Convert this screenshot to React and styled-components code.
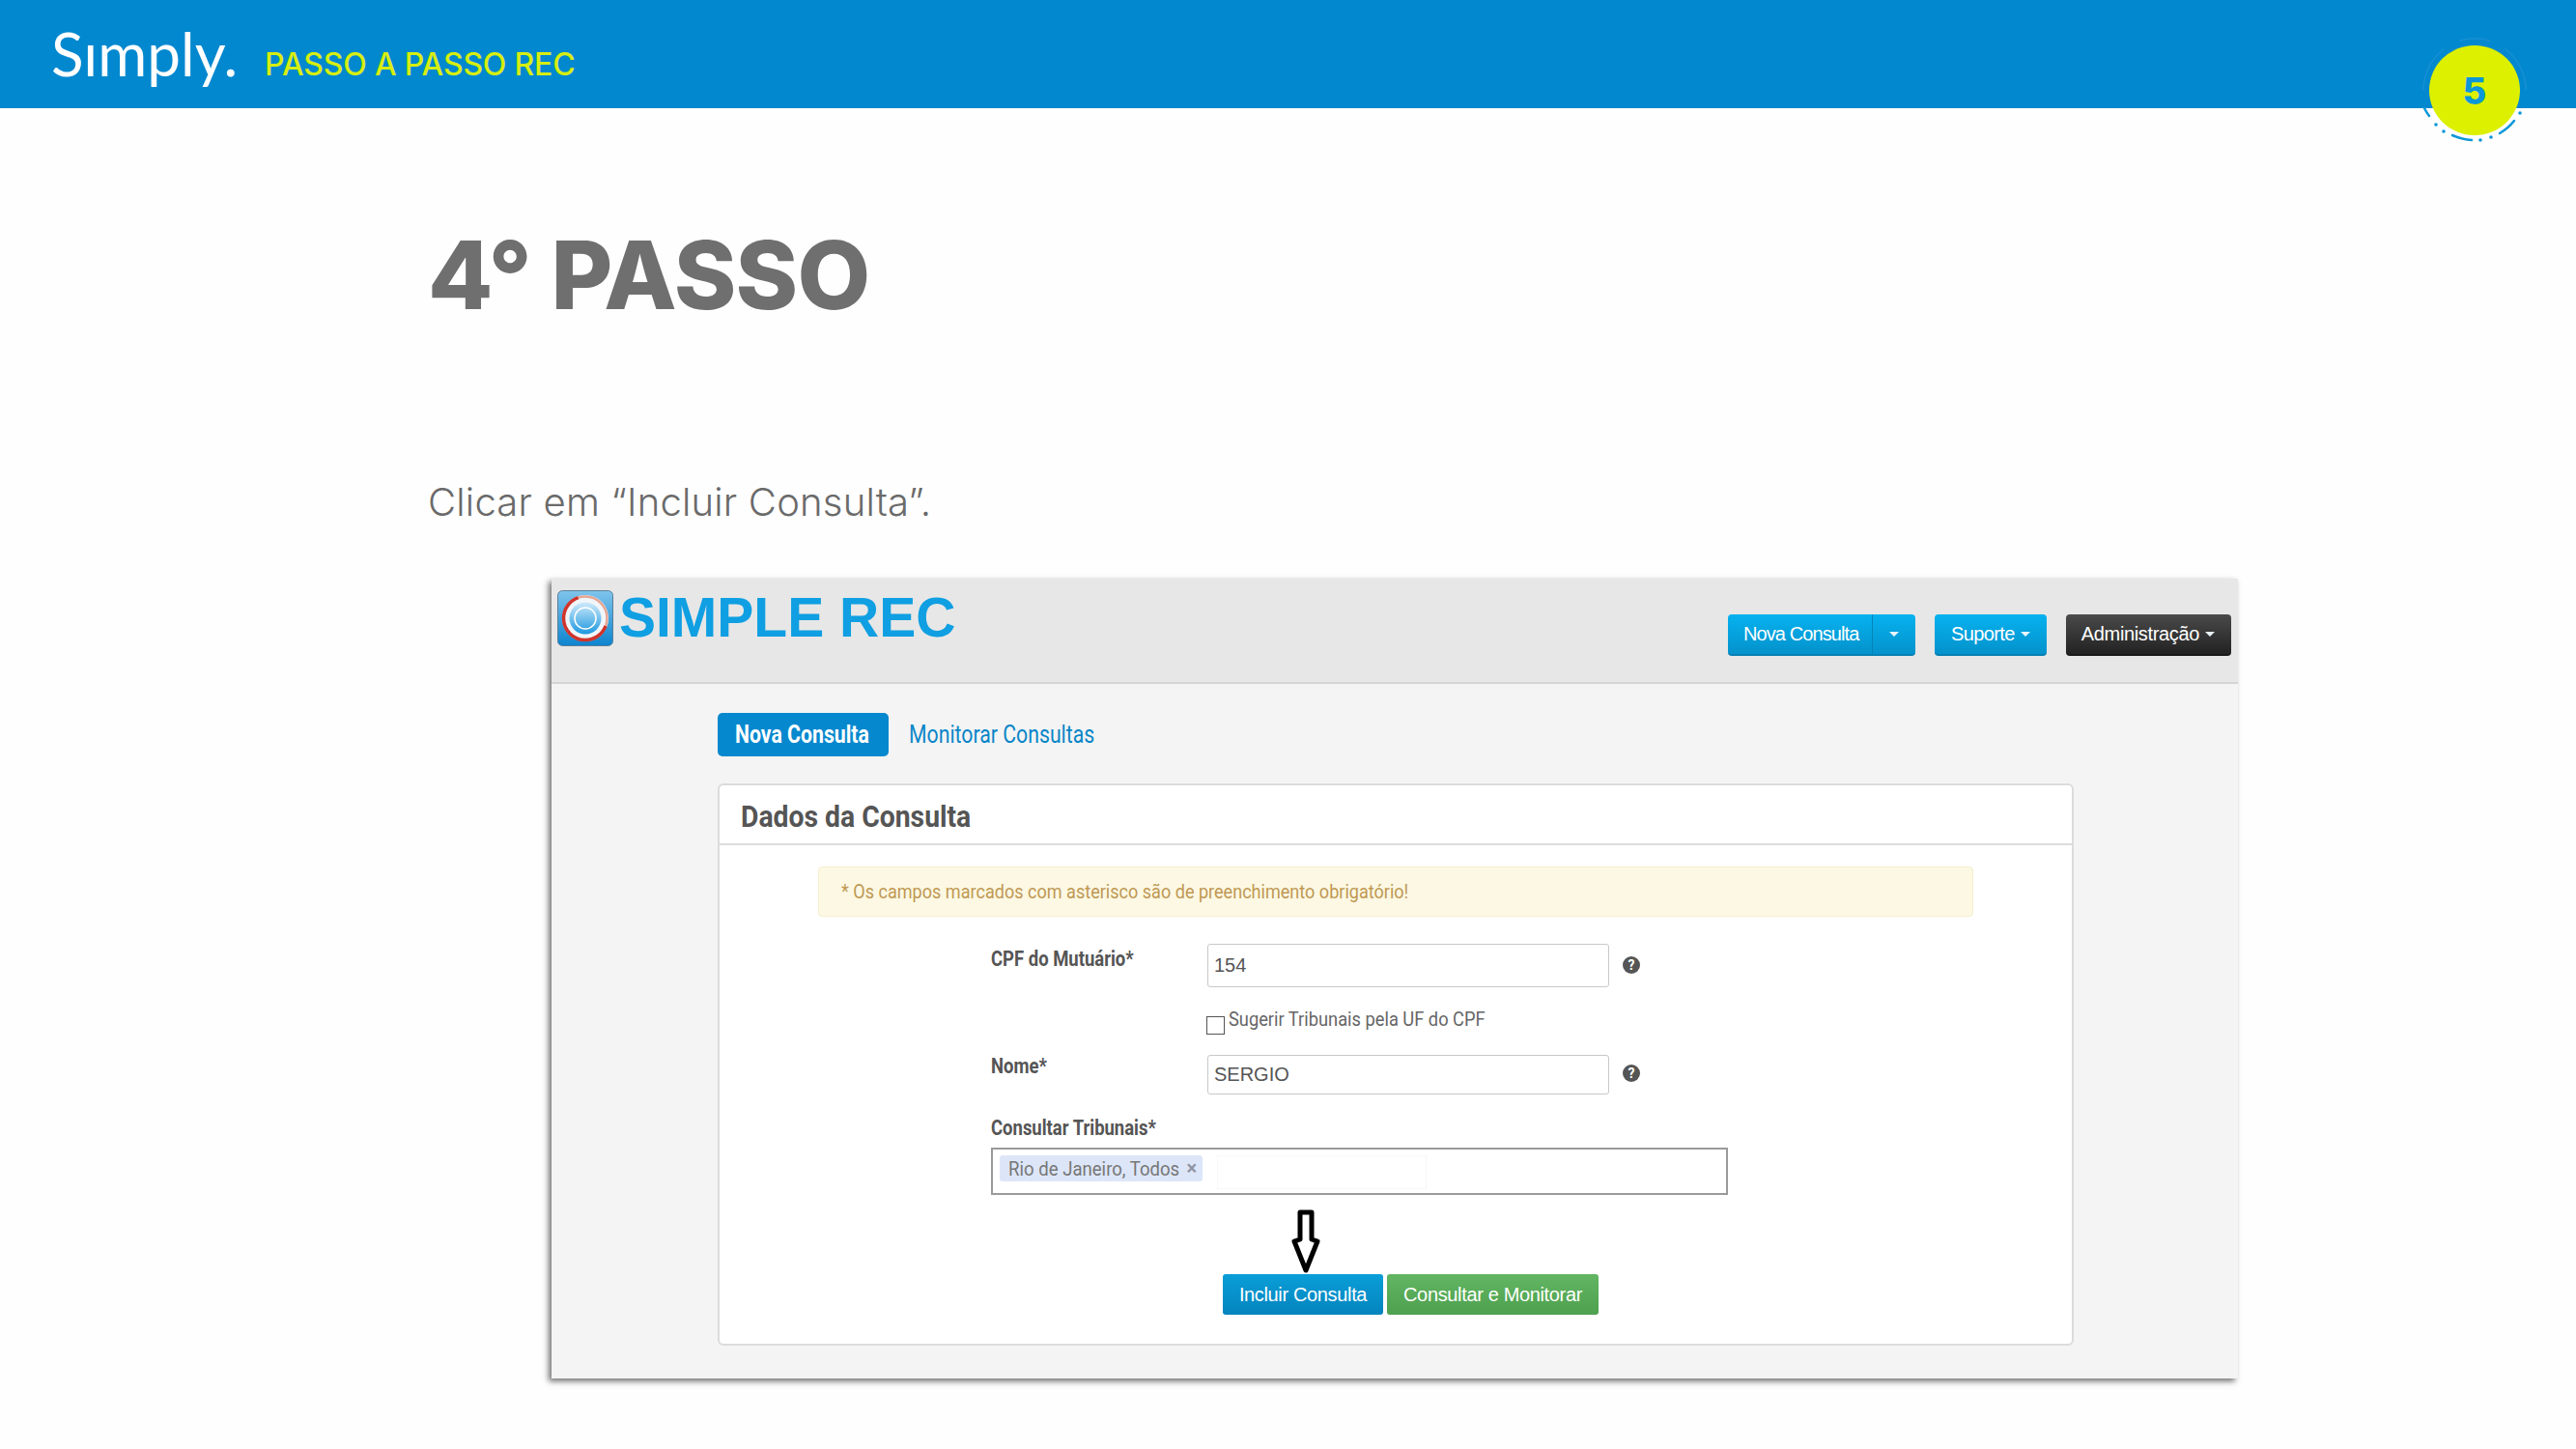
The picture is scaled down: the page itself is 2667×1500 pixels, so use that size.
import React from 'react'
import styled, { createGlobalStyle } from 'styled-components'

const GlobalStyle = createGlobalStyle`
  html, body {
    margin: 0;
    padding: 0;
    background: #fefefe;
  }
  * {
    box-sizing: border-box;
  }
`

const Page = styled.div`
  position: relative;
  width: 2667px;
  height: 1500px;
  overflow: hidden;
  font-family: 'Inter', 'Liberation Sans', sans-serif;
`

const TopBar = styled.header`
  display: flex;
  align-items: flex-start;
  height: 112px;
  padding-left: 53px;
  background: #0288cf;
`

const Brand = styled.div`
  margin-top: 18px;
  font-family: 'Lato', sans-serif;
  font-size: 62px;
  line-height: 74px;
  font-weight: 400;
  color: #fff;
`

const Section = styled.div`
  margin: 48px 0 0 28px;
  font-size: 32px;
  line-height: 38px;
  font-weight: 500;
  letter-spacing: -0.2px;
  color: #d6ee10;
`

const Badge = styled.div`
  position: absolute;
  top: 33px;
  left: 2502px;
  width: 120px;
  height: 120px;
`

const BadgeNumber = styled.div`
  position: absolute;
  top: 14px;
  left: 13px;
  display: flex;
  align-items: center;
  justify-content: center;
  width: 94px;
  height: 93px;
  border-radius: 50%;
  background: #dcf000;
  font-size: 38px;
  font-weight: 800;
  color: #0a97d8;
`

const Main = styled.main`
  padding-left: 443px;
`

const Title = styled.h1`
  margin: 115px 0 0;
  font-size: 98px;
  line-height: 116px;
  font-weight: 800;
  letter-spacing: -0.8px;
  color: #6f6f6f;
`

const Lead = styled.p`
  margin: 153px 0 0;
  font-size: 40px;
  line-height: 48px;
  font-weight: 300;
  letter-spacing: 0.2px;
  color: #6a6a6a;
`

const Shot = styled.section`
  width: 1746px;
  height: 828px;
  margin: 55px 0 0 128px;
  background: #f4f4f4;
  box-shadow: -3px 3px 6px rgba(0, 0, 0, 0.55);
  font-family: 'Roboto', 'Liberation Sans', sans-serif;
`

// the app in the screenshot uses a condensed face, none is installed
const Squeeze = styled.span`
  display: inline-block;
  white-space: nowrap;
  transform: scaleX(${p => p.$x});
  transform-origin: left center;
`

const ShotHeader = styled.div`
  display: flex;
  justify-content: space-between;
  height: 109px;
  padding: 12px 7px 0 6px;
  background: #e7e7e7;
  border-bottom: 2px solid #d4d4d4;
`

const Logo = styled.div`
  display: flex;
  align-items: flex-start;
  gap: 6px;
`

const LogoText = styled.div`
  font-family: 'Liberation Sans', sans-serif;
  font-size: 57px;
  line-height: 56px;
  font-weight: 700;
  color: #0f9fe2;
`

const Nav = styled.nav`
  display: flex;
  gap: 20px;
  padding-top: 25px;
`

const NavButton = styled.div`
  display: flex;
  align-items: center;
  gap: 6px;
  height: 43px;
  padding: 0 ${p => (p.$dark ? '17px 0 16px' : '17px')};
  border-radius: 4px;
  font-family: 'Liberation Sans', sans-serif;
  font-size: 20px;
  letter-spacing: ${p => (p.$dark ? '-0.35px' : '-0.6px')};
  color: #fff;
  background: ${p => (p.$dark
    ? 'linear-gradient(#4a4a4a, #222)'
    : 'linear-gradient(#06b2ef, #0492cc)')};
  border-bottom: 2px solid ${p => (p.$dark ? '#1a1a1a' : '#0580b3')};
`

const SplitButton = styled(NavButton)`
  padding: 0;
  gap: 0;
  letter-spacing: -0.9px;
`

const SplitLabel = styled.span`
  display: flex;
  align-items: center;
  width: 150px;
  height: 100%;
  padding-left: 16px;
  border-right: 1px solid #0683b8;
`

const SplitCaret = styled.span`
  display: flex;
  align-items: center;
  justify-content: center;
  width: 44px;
`

const Caret = styled.i`
  width: 0;
  height: 0;
  border-left: 5px solid transparent;
  border-right: 5px solid transparent;
  border-top: 5px solid #e8f4fa;
`

const ShotBody = styled.div`
  padding: 30px 170px 0 172px;
`

const Tabs = styled.div`
  display: flex;
  align-items: center;
  gap: 21px;
  height: 45px;
`

const Tab = styled.div`
  display: flex;
  align-items: center;
  width: ${p => (p.$active ? '177px' : 'auto')};
  height: 45px;
  padding-left: ${p => (p.$active ? '18px' : '0')};
  border-radius: 5px;
  font-size: 25px;
  font-weight: ${p => (p.$active ? 700 : 400)};
  color: ${p => (p.$active ? '#fff' : '#0a86c8')};
  background: ${p => (p.$active ? '#0688cf' : 'transparent')};
`

const Card = styled.div`
  height: 582px;
  margin-top: 28px;
  background: #fff;
  border: 2px solid #dcdcdc;
  border-radius: 6px;
`

const CardTitle = styled.h2`
  height: 62px;
  margin: 0;
  padding: 0 0 0 22px;
  border-bottom: 2px solid #dcdcdc;
  font-size: 32px;
  line-height: 64px;
  font-weight: 700;
  color: #555;
`

const CardBody = styled.div`
  padding: 22px 102px 0;
`

const Alert = styled.div`
  height: 52px;
  padding-left: 23px;
  background: #fcf8e3;
  border: 1px solid #f6eed0;
  border-radius: 4px;
  font-size: 21px;
  line-height: 50px;
  color: #c09853;
`

const Form = styled.div`
  padding: 28px 0 0 179px;
`

const Field = styled.div`
  display: grid;
  grid-template-columns: 224px 416px auto;
  align-items: start;
  margin-bottom: ${p => p.$gap}px;
`

const Label = styled.label`
  display: block;
  padding-top: ${p => p.$top || 0}px;
  font-size: 22px;
  line-height: 24px;
  font-weight: 700;
  color: #555;
`

const Input = styled.div`
  height: ${p => p.$h}px;
  padding-left: 6px;
  background: #fff;
  border: 1.5px solid #c8c8c8;
  border-radius: 3px;
  font-family: 'Liberation Sans', sans-serif;
  font-size: 20px;
  line-height: ${p => p.$h - 3}px;
  color: #555;
`

const Help = styled.span`
  display: flex;
  align-items: center;
  justify-content: center;
  width: 18px;
  height: 18px;
  margin: ${p => p.$top}px 0 0 14px;
  border-radius: 50%;
  background: #555;
  font-size: 14px;
  font-weight: 700;
  color: #fff;
`

const CheckRow = styled.div`
  display: flex;
  align-items: flex-start;
  gap: 4px;
  height: 49px;
  margin-left: 223px;
  font-size: 21px;
  line-height: 24px;
  color: #666;
`

const CheckBox = styled.span`
  width: 19px;
  height: 19px;
  margin-top: 9px;
  background: #fff;
  border: 1.5px solid #555;
`

const Picker = styled.div`
  display: flex;
  align-items: flex-start;
  gap: 15px;
  width: 763px;
  height: 49px;
  margin-top: 8px;
  padding: 6px 7px;
  border: 2px solid #9a9a9a;
`

const Chip = styled.div`
  position: relative;
  display: flex;
  align-items: center;
  width: 210px;
  height: 27px;
  padding-left: 9px;
  background: #dde6f8;
  border-radius: 3px;
  font-size: 21px;
  color: #777;
`

const ChipClose = styled.span`
  position: absolute;
  right: 6px;
  top: 1px;
  font-size: 20px;
  font-weight: 700;
  color: #8f93a3;
`

const PickerGhost = styled.div`
  width: 217px;
  height: 35px;
  border: 1px solid #f8f8f8;
`

const Actions = styled.div`
  position: relative;
  display: flex;
  gap: 4px;
  margin: 82px 0 0 240px;
`

const Arrow = styled.svg`
  position: absolute;
  top: -67px;
  left: 70px;
`

const ActionButton = styled.div`
  display: flex;
  align-items: center;
  justify-content: center;
  width: ${p => p.$w}px;
  height: 42px;
  border-radius: 3px;
  font-family: 'Liberation Sans', sans-serif;
  font-size: 20px;
  letter-spacing: -0.35px;
  color: #fff;
  background: ${p => (p.$green
    ? 'linear-gradient(#62b562, #4ea04e)'
    : 'linear-gradient(#0a9ed8, #0484bd)')};
`

const LogoIcon = () => (
  <svg width="58" height="58" viewBox="0 0 58 58">
    <defs>
      <linearGradient id="tile" x1="0" y1="0" x2="0" y2="1">
        <stop offset="0" stopColor="#7fc4ec" />
        <stop offset="1" stopColor="#0d84cf" />
      </linearGradient>
      <linearGradient id="core" x1="0" y1="0" x2="0" y2="1">
        <stop offset="0" stopColor="#cfeafa" />
        <stop offset="1" stopColor="#1c98e0" />
      </linearGradient>
    </defs>
    <rect x="0.5" y="0.5" width="57" height="57" rx="5" fill="url(#tile)" stroke="#5b7f99" />
    <circle cx="29" cy="29" r="24" fill="#f1f6fa" />
    <circle cx="29" cy="29" r="22.5" fill="none" stroke="#d0342c" strokeWidth="3.5" strokeDasharray="90 52" strokeDashoffset="-8" />
    <circle cx="29" cy="29" r="22.5" fill="none" stroke="#e8a593" strokeWidth="2.5" strokeDasharray="52 90" strokeDashoffset="-98" />
    <circle cx="29" cy="29" r="16.5" fill="url(#core)" />
    <circle cx="29" cy="29" r="11" fill="none" stroke="#fff" strokeWidth="1.5" />
  </svg>
)

const BadgeRing = () => (
  <svg width="120" height="120" viewBox="0 0 120 120">
    <g fill="none" strokeLinecap="round">
      <path d="M8 79 A53 53 0 0 0 13 87" stroke="#0a97d8" strokeWidth="2.5" />
      <path d="M37 107 A53 53 0 0 0 57 112" stroke="#0a97d8" strokeWidth="2.5" />
      <path d="M86 105 A53 53 0 0 0 101 92" stroke="#0a97d8" strokeWidth="2.5" />
      <path d="M7 60 A53 53 0 0 1 28 18" stroke="#138ed2" strokeWidth="2" />
      <path d="M45 9 A53 53 0 0 1 75 9" stroke="#138ed2" strokeWidth="2" />
      <path d="M92 18 A53 53 0 0 1 113 59" stroke="#138ed2" strokeWidth="2" />
    </g>
    <g fill="#0a97d8">
      <circle cx="20" cy="96" r="1.8" />
      <circle cx="28" cy="103" r="1.8" />
      <circle cx="66" cy="112" r="1.8" />
      <circle cx="77" cy="109" r="1.8" />
      <circle cx="107" cy="84" r="1.8" />
    </g>
  </svg>
)

const App = () => {
  return (
    <Page>
      <GlobalStyle />
      <TopBar>
        <Brand>Sımply.</Brand>
        <Section>PASSO A PASSO REC</Section>
      </TopBar>
      <Badge>
        <BadgeRing />
        <BadgeNumber>5</BadgeNumber>
      </Badge>

      <Main>
        <Title>4° PASSO</Title>
        <Lead>Clicar em “Incluir Consulta”.</Lead>

        <Shot>
          <ShotHeader>
            <Logo>
              <LogoIcon />
              <LogoText>SIMPLE REC</LogoText>
            </Logo>
            <Nav>
              <SplitButton>
                <SplitLabel>Nova Consulta</SplitLabel>
                <SplitCaret><Caret /></SplitCaret>
              </SplitButton>
              <NavButton>Suporte <Caret /></NavButton>
              <NavButton $dark>Administração <Caret /></NavButton>
            </Nav>
          </ShotHeader>

          <ShotBody>
            <Tabs>
              <Tab $active><Squeeze $x={0.85}>Nova Consulta</Squeeze></Tab>
              <Tab><Squeeze $x={0.85}>Monitorar Consultas</Squeeze></Tab>
            </Tabs>

            <Card>
              <CardTitle><Squeeze $x={0.885}>Dados da Consulta</Squeeze></CardTitle>
              <CardBody>
                <Alert>
                  <Squeeze $x={0.86}>* Os campos marcados com asterisco são de preenchimento obrigatório!</Squeeze>
                </Alert>
                <Form>
                  <Field $gap={21}>
                    <Label $top={4}><Squeeze $x={0.84}>CPF do Mutuário*</Squeeze></Label>
                    <Input $h={45}>154</Input>
                    <Help $top={13}>?</Help>
                  </Field>
                  <CheckRow>
                    <CheckBox />
                    <Squeeze $x={0.87}>Sugerir Tribunais pela UF do CPF</Squeeze>
                  </CheckRow>
                  <Field $gap={23}>
                    <Label><Squeeze $x={0.84}>Nome*</Squeeze></Label>
                    <Input $h={41}>SERGIO</Input>
                    <Help $top={10}>?</Help>
                  </Field>
                  <Label><Squeeze $x={0.84}>Consultar Tribunais*</Squeeze></Label>
                  <Picker>
                    <Chip>
                      <Squeeze $x={0.885}>Rio de Janeiro, Todos</Squeeze>
                      <ChipClose>×</ChipClose>
                    </Chip>
                    <PickerGhost />
                  </Picker>
                  <Actions>
                    <Arrow width="32" height="67" viewBox="0 0 32 67">
                      <path
                        d="M10 3 H22 V31 L28 33 L16 63 L4 33 L10 31 Z"
                        fill="#fff"
                        stroke="#000"
                        strokeWidth="5"
                        strokeLinejoin="round"
                      />
                    </Arrow>
                    <ActionButton $w={166}>Incluir Consulta</ActionButton>
                    <ActionButton $w={219} $green>Consultar e Monitorar</ActionButton>
                  </Actions>
                </Form>
              </CardBody>
            </Card>
          </ShotBody>
        </Shot>
      </Main>
    </Page>
  )
}

export default App
